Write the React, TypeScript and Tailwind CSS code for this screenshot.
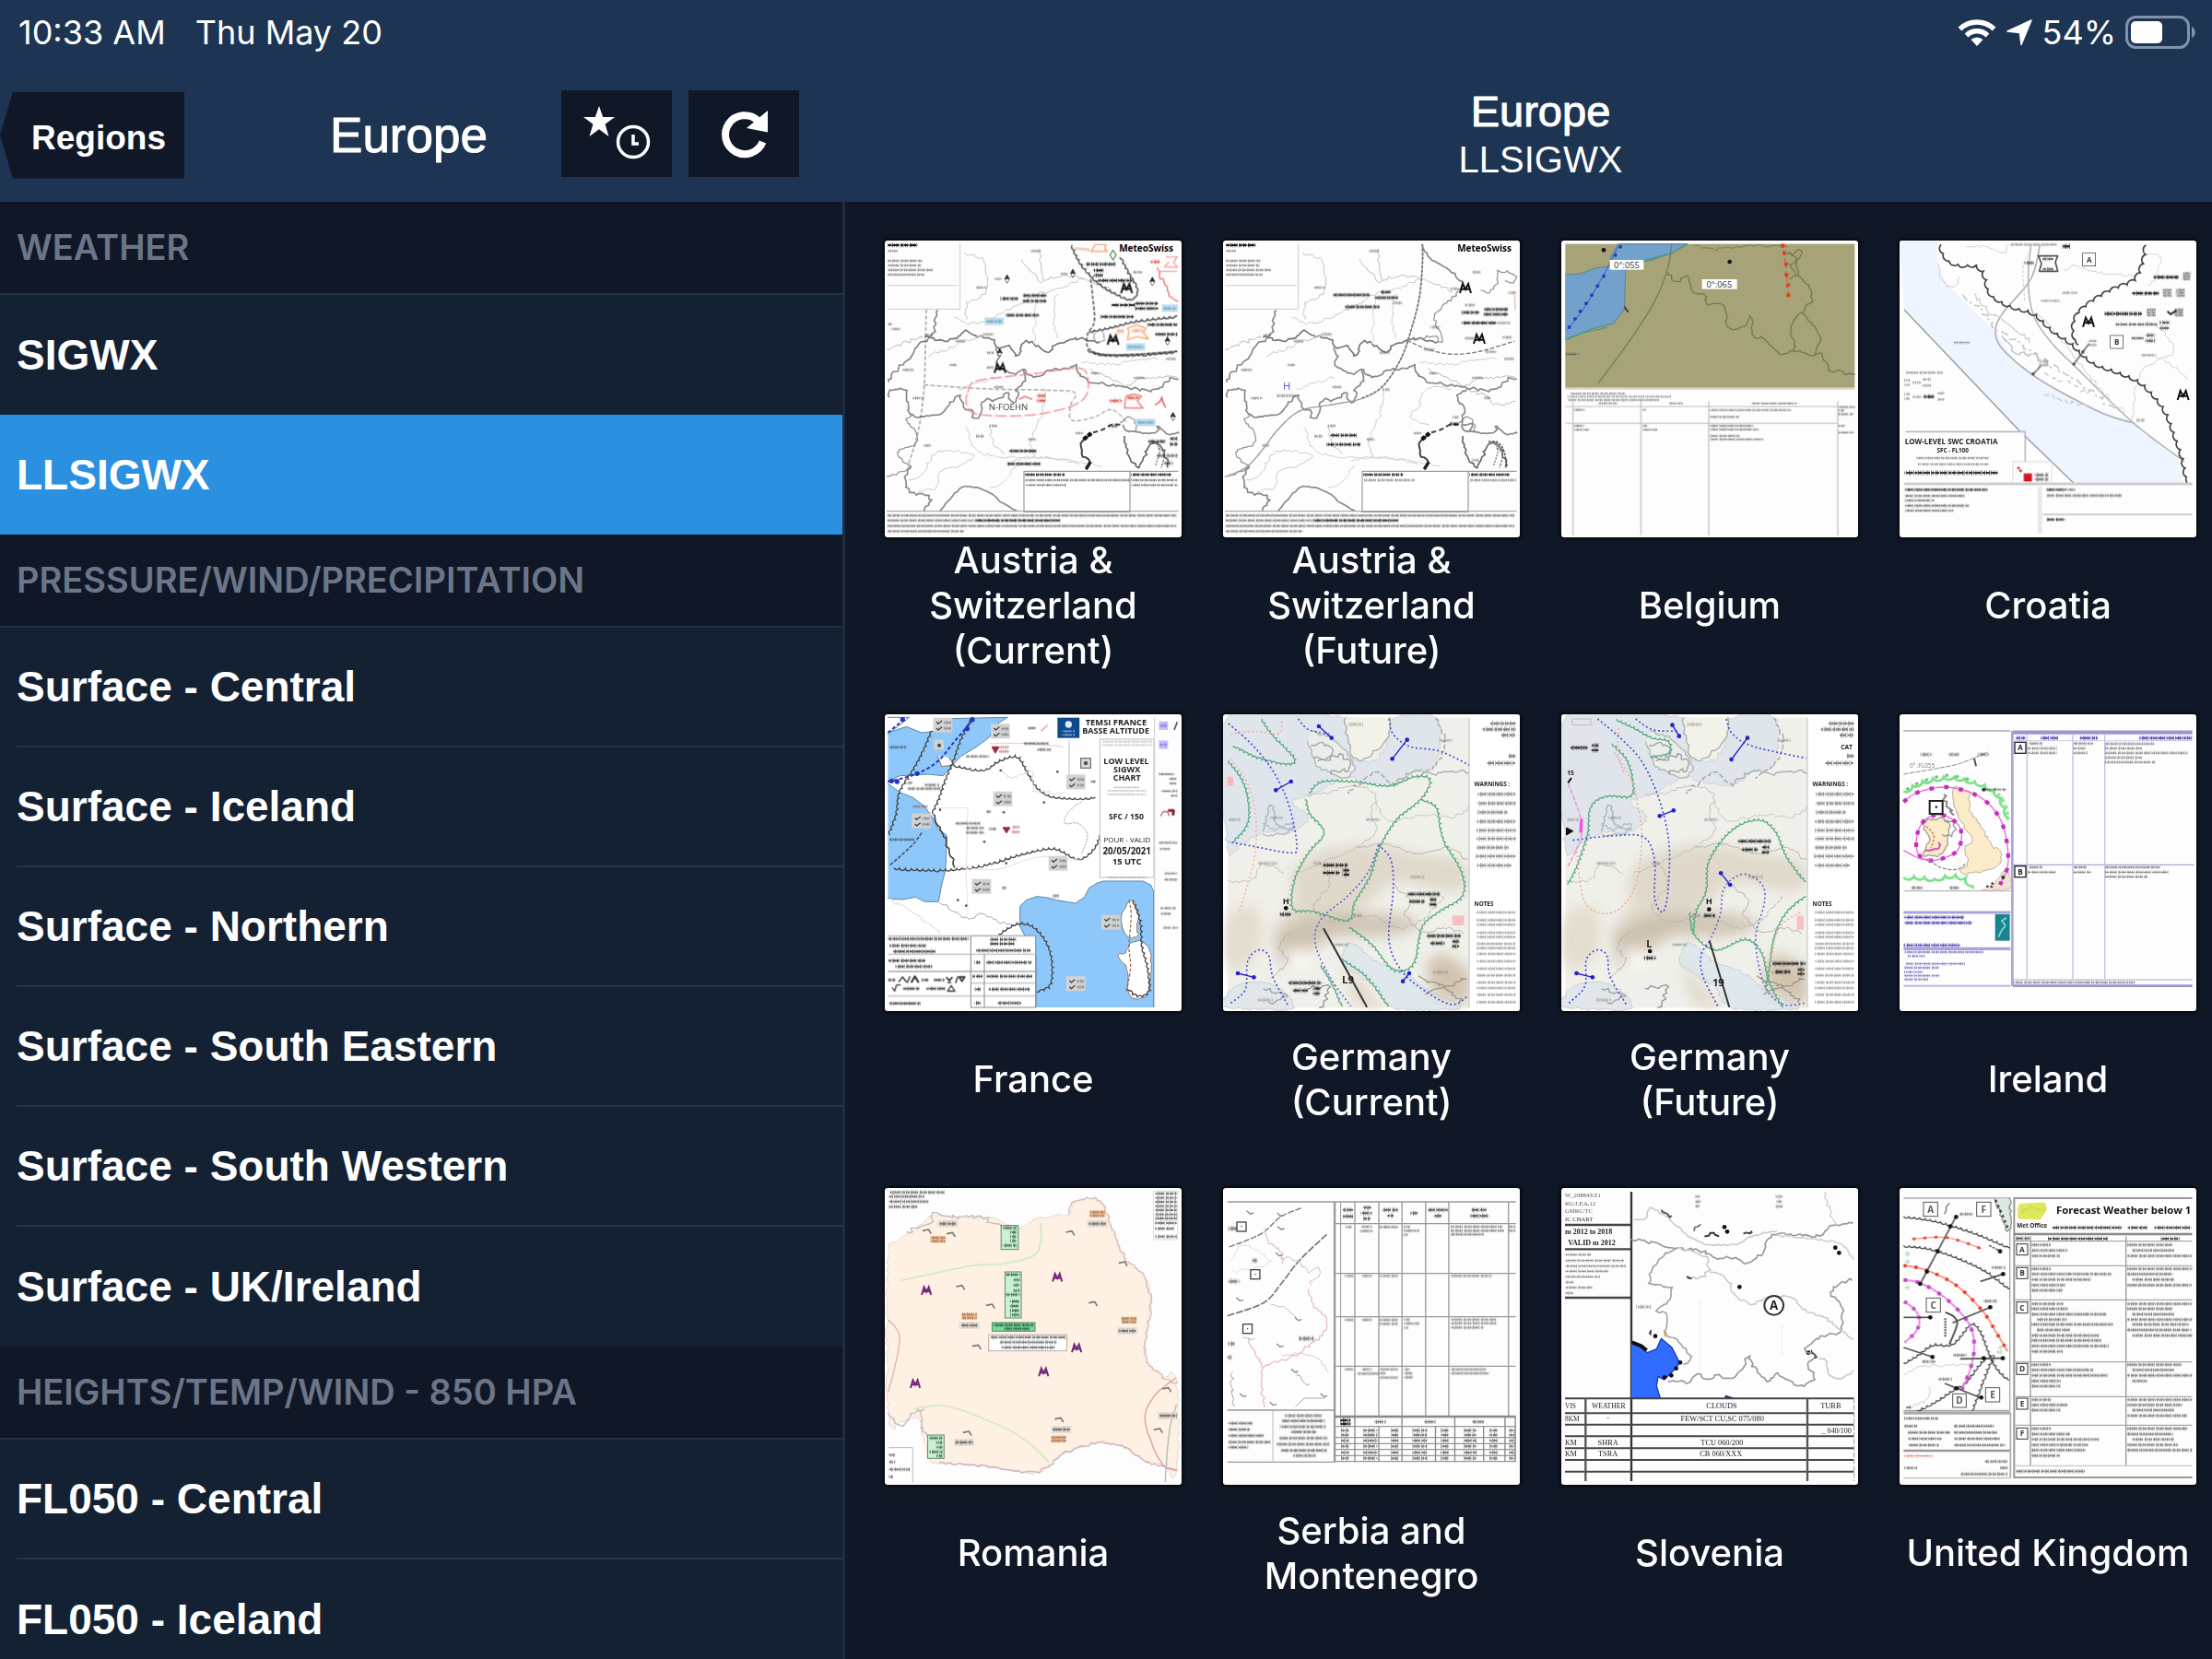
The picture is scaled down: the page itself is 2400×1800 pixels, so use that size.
import { createContext, useContext, useState } from "react";
import type { ReactNode } from "react";

/* ---------- chart drawing kit ---------- */

type Frame = { ox: number; oy: number; k: number };
const FrameContext = createContext<Frame>({ ox: 0, oy: 0, k: 1 });

function useMap() {
  const f = useContext(FrameContext);
  return { X: (x: number) => (x - f.ox) * f.k, Y: (y: number) => y - f.oy, k: f.k };
}

function Chart({ ox, oy, k = 1, children }: { ox: number; oy: number; k?: number; children: ReactNode }) {
  return (
    <FrameContext.Provider value={{ ox, oy, k }}>
      <svg viewBox="0 0 966 966" className="block size-full" aria-hidden="true">
        {children}
      </svg>
    </FrameContext.Provider>
  );
}

type Point = [number, number];

/* Points spaced evenly by step along the spline through pts. */
function walk(pts: Point[], close: boolean, step: number): Point[] {
  const n = pts.length;
  const at = (i: number) => (close ? pts[(i + n) % n] : pts[Math.max(0, Math.min(n - 1, i))]);
  const out: Point[] = [pts[0]];
  let [px, py] = pts[0];
  for (let i = 0; i < (close ? n : n - 1); i++) {
    const [a, b, e, f] = [at(i - 1), at(i), at(i + 1), at(i + 2)];
    for (let j = 1; j <= 60; j++) {
      const t = j / 60;
      const q = (m: 0 | 1) =>
        0.5 *
        (2 * b[m] +
          (e[m] - a[m]) * t +
          (2 * a[m] - 5 * b[m] + 4 * e[m] - f[m]) * t * t +
          (3 * b[m] - a[m] - 3 * e[m] + f[m]) * t * t * t);
      const [x, y] = [q(0), q(1)];
      if (Math.hypot(x - px, y - py) >= step) {
        out.push([x, y]);
        [px, py] = [x, y];
      }
    }
  }
  if (!close) out.push(pts[n - 1]);
  return out;
}

function noise(i: number, seed: number) {
  const v = Math.sin(i * 12.9898 + seed * 0.731) * 43758.5453;
  return (v - Math.floor(v)) * 2 - 1;
}

type LineProps = {
  p: string;
  c?: string;
  w?: number;
  dash?: string;
  fill?: string;
  sharp?: boolean;
  close?: boolean;
  o?: number;
  rough?: number;
};

function usePoints(p: string): Point[] {
  const { X, Y } = useMap();
  return p
    .trim()
    .split(/\s+/)
    .map((s) => {
      const [x, y] = s.split(",").map(Number);
      return [X(x), Y(y)];
    });
}

/* Line through the points of p: straight if sharp, a natural coast or river otherwise. */
function L({ p, c = "#777", w = 3, dash, fill = "none", sharp, close = false, o, rough }: LineProps) {
  const pts = usePoints(p);
  const amp = rough ?? (dash ? 0 : 5);
  const seq = sharp ? pts : walk(pts, close, 9).map(([x, y], i): Point => [x + noise(i, pts[0][0]) * amp, y + noise(i + 99, pts[0][1]) * amp]);
  const d = "M" + seq.map(([x, y]) => `${x.toFixed(1)} ${y.toFixed(1)}`).join("L") + (close ? "Z" : "");
  return <path d={d} stroke={c} strokeWidth={w} strokeDasharray={dash} fill={fill} strokeLinejoin="round" opacity={o} />;
}

/* Boundary line made of small arcs. */
function Scallop({ p, c = "#444", w = 4, close = false, size = 20 }: { p: string; c?: string; w?: number; close?: boolean; size?: number }) {
  const seq = walk(usePoints(p), close, size);
  const r = size * 0.6;
  const d = `M${seq[0][0].toFixed(1)} ${seq[0][1].toFixed(1)}` + seq.slice(1).map(([x, y]) => `A${r} ${r} 0 0 0 ${x.toFixed(1)} ${y.toFixed(1)}`).join("");
  return <path d={d} stroke={c} strokeWidth={w} fill="none" strokeLinejoin="miter" />;
}

function R({ x, y, w, h, f = "none", c = "none", s = 3, o }: { x: number; y: number; w: number; h: number; f?: string; c?: string; s?: number; o?: number }) {
  const { X, Y, k } = useMap();
  return <rect x={X(x)} y={Y(y)} width={w * k} height={h} fill={f} stroke={c} strokeWidth={s} opacity={o} />;
}

function T({ x, y, s = 20, b, c = "#222", a = "start", serif, children }: { x: number; y: number; s?: number; b?: boolean; c?: string; a?: "start" | "middle" | "end"; serif?: boolean; children: ReactNode }) {
  const { X, Y } = useMap();
  return (
    <text
      x={X(x)}
      y={Y(y)}
      fontSize={s}
      fontWeight={b ? 700 : 400}
      fill={c}
      textAnchor={a}
      className={serif ? "font-['Liberation_Serif',serif]" : "font-['Open_Sans',sans-serif]"}
    >
      {children}
    </text>
  );
}

/* Blocks of fine print: each "x,y,width" is one printed line. */
function Print({ at, c = "#555", h = 7, o = 0.6 }: { at: string; c?: string; h?: number; o?: number }) {
  const { X, Y, k } = useMap();
  return (
    <g fill="none" stroke={c} opacity={o}>
      {at
        .trim()
        .split(/\s+/)
        .map((s) => {
          const [x, y, w] = s.split(",").map(Number);
          return (
            <g key={s}>
              <path d={`M${X(x)} ${Y(y)}h${w * k}`} strokeWidth={h * 0.6} strokeDasharray="14 3 22 5 9 2" strokeDashoffset={x % 17} />
              <path d={`M${X(x)} ${Y(y)}h${w * k}`} strokeWidth={h * 1.5} strokeDasharray="3 4 2 6 4 3 2 5" strokeDashoffset={y % 13} opacity={0.75} />
            </g>
          );
        })}
    </g>
  );
}

function Peaks({ at, c = "#111", s = 1 }: { at: string; c?: string; s?: number }) {
  const { X, Y } = useMap();
  return (
    <g fill="none" stroke={c} strokeWidth={6}>
      {at.split(" ").map((q) => {
        const [x, y] = q.split(",").map(Number);
        const [cx, cy] = [X(x), Y(y)];
        return (
          <path
            key={q}
            d={`M${cx - 18 * s} ${cy + 16 * s}L${cx - 9 * s} ${cy - 14 * s}L${cx} ${cy + 4 * s}L${cx + 9 * s} ${cy - 14 * s}L${cx + 18 * s} ${cy + 16 * s}M${cx - 12 * s} ${cy + 3 * s}H${cx + 12 * s}`}
          />
        );
      })}
    </g>
  );
}

function Dots({ at, c = "#111", r = 6 }: { at: string; c?: string; r?: number }) {
  const { X, Y } = useMap();
  return (
    <g fill={c}>
      {at.split(" ").map((q) => {
        const [x, y] = q.split(",").map(Number);
        return <circle key={q} cx={X(x)} cy={Y(y)} r={r} />;
      })}
    </g>
  );
}

function Letter({ x, y, t, s = 36, size = 24, c = "#333", w = 3 }: { x: number; y: number; t: string; s?: number; size?: number; c?: string; w?: number }) {
  const { k } = useMap();
  return (
    <>
      <R x={x - s / 2 / k} y={y - s / 2} w={s / k} h={s} f="#fff" c={c} s={w} />
      <T x={x} y={y + size * 0.36} s={size} a="middle" c={c} b>
        {t}
      </T>
    </>
  );
}

/* ---------- Austria & Switzerland ---------- */

function AlpsBase() {
  return (
    <>
      <L p="305,75 305,288 68,288" c="#ccc" sharp />
      <L p="68,211 300,211" c="#ccc" sharp />
      <Print at="70,80,98" c="#000" h={9} o={0.9} />
      <Print at="70,99,32 70,131,112 70,146,108 70,161,146 70,176,118" />
      <T x={999} y={101} s={30} b a="end" c="#000">
        MeteoSwiss
      </T>
      <L p="320,100 325,112 380,125 388,170 395,215 370,250 330,268 325,320" c="#c4c4c4" />
      <L p="505,128 540,170 570,200 610,185 680,183 740,200 800,230" c="#c0c0c0" />
      <L p="570,95 565,150 572,190" c="#bbb" />
      <L p="290,318 340,335 420,310 500,270 560,238 640,215 700,190" c="#c8c8c8" />
      <L p="230,290 225,330 215,375 160,410 150,440 105,480 68,525" c="#888" w={5} />
      <L p="190,375 230,390 290,385 325,360 350,378 400,380 430,410 465,405 490,440 515,395 550,405 590,425 620,405 680,385 760,395" c="#777" w={5} />
      <L p="68,420 120,400 180,380" c="#bbb" />
      <L p="200,440 260,420 320,390 380,378" c="#c8c8c8" />
      <L p="420,410 430,445 425,470 480,500 510,485 530,505 565,510 590,490 640,482 690,468 685,490 720,520 830,540 940,552 980,520 1015,512" c="#888" w={5} />
      <L p="510,485 515,520 490,550 500,570 470,590 460,560 420,585 390,580 375,610 355,652 340,620 320,610 300,570 270,600 235,632 150,635 135,600 130,550 80,550 72,580" c="#888" w={5} />
      <L p="150,635 130,650 165,700 145,740 105,745 115,785 145,800 70,835" c="#999" w={4} />
      <L p="145,800 125,840 140,880 210,905 185,946" c="#888" w={5} />
      <L p="240,946 290,885 330,865 400,885 445,920 490,946" c="#888" w={5} rough={2} />
      <L p="325,670 350,735 400,765 480,770 560,775 700,785 770,800" c="#d0d0d0" />
      <L p="480,780 580,770 690,790" c="#d0d0d0" />
      <L p="140,845 180,830 220,760 280,750 350,765 300,800 240,815 225,870 170,880" c="#d0c6d0" />
      <L p="400,870 450,850 485,800" c="#d4d4d4" />
      <L p="405,665 410,720 450,760" c="#c8c8c8" />
      <L p="580,540 575,620 550,680 535,720 545,770" c="#ccc" />
      <L p="620,240 610,300 620,385" c="#ccc" />
      <L p="555,260 548,330 545,400" c="#d4d4d4" />
      <L p="300,550 360,530 420,510" c="#d0d0d0" />
      <L p="700,460 800,470 860,455 950,450" c="#ccc" />
      <L p="730,480 800,520 850,535 900,512 1010,510" c="#bbb" />
      <L p="735,692 705,715 697,735 705,765 730,785 715,808" c="#444" w={6} rough={3} />
      <L p="732,692 705,714" c="#111" w={13} rough={0} dash="14 4" />
      <L p="730,785 715,808" c="#222" w={10} rough={0} />
      <L p="738,690 770,680 800,664 835,665" c="#444" w={6} dash="16 10" />
      <L p="825,662 850,640 880,660 870,690" c="#999" w={4} />
      <L p="830,665 870,690 940,690 950,665 975,690 1015,692" c="#888" w={5} />
      <L p="840,700 850,750 885,802 905,770 925,730 960,735 985,800" c="#666" w={5} />
      <L p="935,720 955,745 940,800" c="#777" w={4} dash="6 4" />
      <L p="950,740 970,760 960,805" c="#777" w={4} dash="8 4" />
      <R x={513} y={816} w={345} h={132} f="#fff" c="#888" />
      <L p="858,816 1016,816" c="#888" sharp />
      <L p="66,946 1016,946" c="#999" sharp />
      <Print at="68,960,940 68,976,280 68,994,940 68,1011,250" c="#333" h={7} />
      <Print at="352,976,278" c="#000" h={8} o={0.85} />
      <Print at="516,827,130 862,827,130" c="#111" h={8} o={0.85} />
      <Print at="535,99,36 355,218,36 380,370,34 190,373,26 270,470,26 118,486,36 290,392,30 150,578,38 185,732,26 400,668,26 357,702,26 680,692,26 870,512,36 525,712,28 730,497,28 415,542,30 975,450,32" c="#666" h={8} />
    </>
  );
}

function AustriaCurrent() {
  return (
    <Chart ox={60} oy={65}>
      <AlpsBase />
      <L p="195,290 192,400 188,540 170,680 135,800" dash="12 7" c="#666" />
      <L p="188,535 400,548 590,552 680,560 665,600 668,650 740,640 800,615 850,660" dash="14 7" c="#777" />
      <Scallop p="670,80 700,140 760,205 830,245 865,255 880,225 850,170 825,120" c="#333" w={4} size={17} />
      <L p="730,190 738,260 742,330 720,370 722,415 770,435 880,435 1012,425" c="#333" w={4} dash="12 6" />
      <Scallop p="725,360 800,345 880,325 1012,310" c="#333" w={4} size={17} />
      <Scallop p="720,420 770,435 880,435 1012,425" c="#333" w={4} size={17} />
      <L p="740,370 755,400 775,380 765,350" c="#888" />
      <L p="330,560 350,525 440,510 560,497 690,480 720,510 715,570 665,605 560,630 440,636 345,625 325,590" close c="#f0868c" w={4} dash="38 10" />
      <Peaks at="847,220 803,388 435,480" />
      <R x={385} y={316} w={62} h={24} f="#bcdcf0" />
      <R x={962} y={273} w={52} h={24} f="#bcdcf0" />
      <R x={845} y={399} w={62} h={24} f="#bcdcf0" />
      <R x={875} y={645} w={66} h={24} f="#bcdcf0" />
      <Print at="390,328,52 968,286,40 850,411,50 882,657,52" c="#4a83a8" />
      <L p="735,95 745,78 780,78 775,90 785,100 730,100" c="#f6b088" w={5} close sharp />
      <L p="680,90 725,95" c="#f6a878" w={8} dash="5 3" />
      <L p="855,360 850,350 880,340 910,350 902,365 918,385 880,378 850,388" c="#f8b27c" w={5} close sharp />
      <Print at="866,358,36 812,360,26" c="#f08a4a" h={12} />
      <L p="845,572 870,565 895,572 882,588 900,610 840,610" c="#f08a8a" w={5} close sharp />
      <Print at="848,577,38 792,587,40 555,570,28 555,586,28 925,134,30" c="#e03c3c" h={10} o={0.8} />
      <L p="940,600 955,590 962,575 966,592 974,608" c="#e86868" w={5} sharp />
      <L p="497,582 515,572 540,582" c="#e86868" w={4} sharp />
      <L p="945,150 958,185 975,215 985,245 1012,265" c="#f08a8a" w={5} />
      <L p="950,165 1012,165" c="#f4a4a4" w={4} sharp />
      <L p="975,118 1012,118 1000,135 1012,152 970,150 985,135" c="#f6b0b0" w={5} sharp />
      <Print at="437,254,58 508,244,78 508,262,78 453,308,108 465,750,88 458,792,110 715,142,98 755,195,110 798,275,76 875,270,74 875,286,74 762,313,108 740,162,32 740,178,32 917,719,56 988,710,24 988,728,24 940,370,72 915,339,98" c="#000" h={9} o={0.8} />
      <Print at="518,845,340 518,861,132 862,845,150 862,861,150" c="#444" />
      <Print at="788,668,30 945,765,68 968,790,30" c="#222" h={10} />
      <T x={398} y={617} s={29} c="#444">
        N-FOEHN
      </T>
      {["458,190", "672,172", "931,198", "998,638", "434,430", "980,392"].map((q) => {
        const [x, y] = q.split(",").map(Number);
        return (
          <g key={q}>
            <L p={`${x - 8},${y} ${x},${y + 14} ${x + 8},${y}`} c="#777" w={3} sharp />
            <L p={`${x - 8},${y} ${x},${y - 14} ${x + 8},${y}`} close fill="#333" c="#333" w={2} sharp />
          </g>
        );
      })}
      <L p="793,112 803,96 813,112 803,128" close c="#5c9a5c" w={4} sharp />
      <Print at="70,337,16 80,353,30 417,190,22 632,173,24 868,168,30 393,430,22 390,478,22" c="#555" />
    </Chart>
  );
}

function AustriaFuture() {
  return (
    <Chart ox={51} oy={65}>
      <FrameContext.Provider value={{ ox: 60, oy: 65, k: 1 }}>
        <AlpsBase />
      </FrameContext.Provider>
      <L p="700,78 700,140 690,250 665,350 630,450 570,540 500,580 400,600 300,620 230,680 180,745 130,800 68,832" c="#999" w={4} rough={0} />
      <L p="700,78 700,140 690,250 665,350 630,450 570,540 500,580" c="#777" w={6} dash="6 8" />
      <L p="700,80 720,115 770,150 835,205" c="#888" w={5} />
      <L p="650,390 720,420 800,435 890,425 1000,392" c="#777" dash="14 6" w={4} />
      <L p="835,205 800,250 740,310 760,370 765,400 735,375 680,385" c="#999" w={4} />
      <L p="890,230 920,232 945,200 945,165 1000,175 1000,200 970,200" c="#999" w={4} />
      <L p="845,545 810,580 835,610 830,660 865,665 855,690" c="#888" w={5} />
      <L p="790,545 715,545 690,600 660,640 720,665" c="#ccc" />
      <L p="845,550 900,570 940,600 1000,590" c="#bbb" />
      <L p="915,720 945,722 965,750 975,800" c="#555" w={5} dash="8 4" />
      <Peaks at="840,220 885,385" />
      <T x={246} y={551} s={34} c="#5a5ae0">
        H
      </T>
      <Print at="410,242,118 565,233,32 545,251,76 448,281,112 400,699,90 388,729,110 828,299,58 898,289,80 898,305,80 828,333,110 788,662,30" c="#000" h={9} o={0.8} />
      <Print at="510,845,165 856,845,150 603,268,34 560,430,32 862,168,30 705,420,34 725,347,34 940,333,46 790,222,28 980,235,24 838,275,32 838,383,28 960,380,30 905,427,34 225,570,64 570,550,24 900,577,22 795,640,24 860,780,24" c="#666" h={8} />
      <L p="1000,240 1002,290" c="#f6d0c0" w={6} sharp />
    </Chart>
  );
}

/* ---------- Belgium ---------- */

function Belgium() {
  return (
    <Chart ox={40} oy={65}>
      <R x={53} y={76} w={942} h={468} f="#a5a377" />
      <L p="53,176 100,174 150,155 205,148 200,120 225,76 450,76 400,105 330,130 250,140 248,200 245,290 210,335 140,352 53,388" fill="#72a2cc" c="#5c7f8c" w={3} sharp />
      <L p="53,388 110,365 190,348" c="#4b9a7c" w={4} rough={2} />
      <L p="300,130 380,112 450,78" c="#4b9a7c" w={4} rough={2} />
      <L p="225,85 195,145 150,225 110,290 60,355" c="#2f57c8" w={3} rough={0} />
      <Dots at="232,85 216,112 178,181 158,213 139,243 121,270 102,295 85,320 66,347" c="#2540b8" />
      <L p="400,76 385,160 345,260 270,380 160,530" c="#7c7b50" w={4} rough={0} />
      <L p="385,165 415,198 450,180 470,235 510,240 515,272 570,275 580,345 615,352 645,335 660,308 665,375 700,385 752,435 800,425 855,438 885,435 920,495 950,485 965,500 995,500" c="#77774c" w={4} rough={4} />
      <L p="780,100 805,130 810,175 850,220 855,260 830,300 880,375 865,435" c="#77774c" w={4} />
      <L p="830,300 800,320 785,365 800,400 795,425" c="#77774c" w={4} />
      <L p="775,115 825,95 800,140 785,150 812,178 785,185" c="#7c7b50" w={4} />
      <L p="470,78 540,95 600,85 780,82" c="#7c7b50" w={3} />
      <L p="760,76 768,125 773,180 779,245" c="#e0603c" w={4} dash="14 8" />
      <Dots at="761,82 766,106 772,142 773,177 778,210 779,243" c="#dc4422" r={7} />
      <R x={198} y={128} w={110} h={32} f="#fff" />
      <R x={498} y={191} w={114} h={32} f="#fff" />
      <T x={253} y={154} s={28} a="middle" c="#333">
        0°:055
      </T>
      <T x={554} y={217} s={28} a="middle" c="#333">
        0°:065
      </T>
      <Dots at="178,96 588,134" r={7} />
      <L p="245,280 258,298" c="#444" w={6} sharp />
      <Print at="56,435,40" c="#444" />
      <R x={53} y={544} w={942} h={6} f="#d6d4c0" />
      <Print at="70,563,178 60,573,338 62,584,296 160,595,62 390,595,46 658,595,150" c="#555" h={6} />
      <L p="53,605 940,605" sharp c="#c4b8c4" />
      <L p="53,660 940,660" sharp c="#c4b8c4" />
      {[78, 299, 520, 940].map((x) => (
        <L key={x} p={`${x},588 ${x},1024`} sharp c="#c8bec8" w={4} />
      ))}
      <Print at="80,616,36 303,616,12 523,617,264 523,639,98 80,668,34 80,681,50 303,668,16 303,681,50 523,668,142 523,680,158 523,701,98 523,712,174 942,607,54 942,618,20 942,630,50 942,668,20 942,690,50" />
    </Chart>
  );
}

/* ---------- Croatia ---------- */

function Croatia() {
  return (
    <Chart ox={63} oy={65}>
      <L p="63,65 185,65 190,160 225,215 300,290 375,360 440,460 550,540 700,610 820,655 970,780 985,852 630,852 470,705 78,290" fill="#eef5fe" c="#eef5fe" sharp w={1} />
      <L p="78,290 455,686" c="#999" w={4} sharp />
      <L p="470,700 630,855" c="#999" w={4} sharp />
      <L p="520,80 490,190 400,300 375,360 400,420 500,505 620,575 730,630 820,658" c="#b0b0b0" w={5} rough={0} />
      <L p="490,80 482,200 500,310 560,400 650,490 820,655 990,785" c="#b8b8b8" w={5} rough={0} />
      <L p="500,300 560,350 700,530 800,630" c="#ccc" />
      <L p="820,655 835,540 860,480 950,430 930,370 870,330" c="#d4d4d4" />
      <L p="900,440 960,480 1005,520" c="#d4d4d4" />
      <L p="600,160 640,150 720,170 830,180" c="#d0d0d0" />
      <L p="280,90 340,85 400,105 415,80" c="#d4d4d4" />
      <L p="870,110 910,120 900,180 870,210" c="#e8d0d0" />
      <L p="470,260 465,150 490,100" c="#ccc" dash="10 5" />
      <L p="190,140 200,200 240,215 260,180" c="#ccc" />
      <L p="260,245 300,265 330,290 375,350 430,380 520,450 640,520 760,610" c="#c4cad0" w={5} rough={9} dash="24 10 8 12" />
      <L p="300,240 350,290 420,340 480,390" c="#ccd2d8" w={4} rough={9} />
      <L p="395,380 420,400 440,430 500,440 520,480" c="#b8c0c8" w={4} rough={8} />
      <L p="540,500 580,520 680,560" c="#c4cad0" w={4} rough={9} dash="18 16" />
      <L p="540,560 600,590 680,600" c="#c4cad0" w={4} rough={8} dash="18 10" />
      <Scallop size={30} p="198,78 215,125 265,145 320,145 345,190 360,240 430,280 500,300 560,355 620,395 650,425 700,465 770,490 840,520 880,555 930,620 960,700 985,770 1000,855" c="#444" w={5} />
      <Scallop size={30} p="865,80 860,130 830,195 760,225 690,265 640,310 630,370 645,405" c="#444" w={5} />
      <Letter x={680} y={127} t="A" s={42} c="#333" w={2} />
      <Letter x={770} y={395} t="B" s={42} c="#333" w={2} />
      <L p="515,115 578,115 570,135 578,165 518,165 525,140" close c="#555" w={5} sharp />
      <Print at="528,125,36 530,158,34 470,138,30" c="#222" h={10} />
      <Print at="592,84,30" c="#111" h={11} o={0.9} />
      <Peaks at="678,330 986,568" />
      <Print at="425,78,150 523,261,60 593,235,48 240,397,52 850,438,48 85,495,118 137,517,28 137,537,28 78,520,18 78,535,18 78,565,18 78,580,18 184,562,26 184,582,26 680,392,24 680,405,24 105,527,28 105,574,28" c="#666" />
      <Print at="820,237,86 728,303,124 890,184,80 142,573,34" c="#000" h={10} o={0.85} />
      <Print at="767,338,134 818,383,40" c="#333" h={9} />
      <g>
        {["983,172", "920,226", "963,226", "868,290", "958,290"].map((q) => {
          const [x, y] = q.split(",").map(Number);
          return <Print key={q} at={`${x},${y},28 ${x},${y + 9},28 ${x},${y + 18},28`} c="#333" h={8} />;
        })}
      </g>
      <Print at="910,332,32 910,350,32 863,373,32 863,391,32" c="#111" h={10} />
      <L p="935,295 945,305 965,292" c="#222" w={6} sharp />
      <L p="680,400 632,465" c="#555" w={4} sharp />
      <L p="525,470 498,500" c="#555" w={4} sharp />
      <Dots at="630,467 498,499 660,427" r={5} c="#444" />
      <Print at="522,458,26 522,470,26 835,650,26" c="#777" h={9} />
      <L p="82,687 472,687 472,785" c="#bbb" w={5} sharp />
      <T x={80} y={729} s={24} b c="#222">
        LOW-LEVEL SWC CROATIA
      </T>
      <T x={236} y={754} s={19} b a="middle">
        SFC - FL100
      </T>
      <Print at="117,773,236 123,793,230" c="#666" />
      <Print at="80,821,304" c="#111" h={10} o={0.85} />
      <L p="432,850 432,785 558,785 558,850" c="#ddd" sharp />
      <R x={467} y={823} w={27} h={26} f="#d81324" />
      <L p="448,803 462,820" c="#b02030" w={8} dash="7 4" sharp />
      <Print at="503,828,44 503,842,44" c="#222" h={10} />
      <L p="78,857 1016,857" c="#cdcdd1" w={9} sharp />
      <L p="520,865 520,1018" c="#e8e8ec" w={14} sharp />
      <L p="530,957 1016,957" c="#cdcdd1" w={6} sharp />
      <Print at="80,876,270 540,876,66 540,973,62" c="#111" h={8} o={0.8} />
      <Print at="80,896,196 80,911,98 80,928,210 80,944,158 540,895,250 608,876,26" c="#444" h={8} />
    </Chart>
  );
}

/* ---------- France ---------- */

const franceNotes: [number, number][] = [
  [250, 80],
  [437, 100],
  [445, 320],
  [683, 265],
  [625, 530],
  [180, 392],
  [376, 605],
  [797, 722],
  [683, 922],
];

function France() {
  return (
    <Chart ox={60} oy={45}>
      <R x={70} y={55} w={868} h={944} f="#fff" />
      <L p="70,105 130,85 180,105 220,100 225,60 460,55 420,80 400,120 360,150 310,180 290,200 270,225 250,245 200,240 110,245 70,262" fill="#8ec8fa" c="#5b86a5" w={3} sharp />
      <L p="70,55 140,55 70,110" fill="#fff" c="#5b86a5" w={3} sharp />
      <L p="232,180 245,215 285,210 268,185" fill="#fff" c="#777" sharp />
      <L p="70,270 110,300 150,315 190,345 215,380 235,420 262,440 258,550 245,600 235,655 190,655 160,640 120,648 70,645" fill="#8ec8fa" c="#5b86a5" w={3} sharp />
      <L p="552,999 552,830 520,775 500,735 500,670 520,650 555,638 590,642 620,650 680,660 710,640 725,610 750,595 770,588 900,588 925,600 935,620 935,999" fill="#8ec8fa" c="#5b86a5" w={3} sharp />
      <L p="863,650 885,690 880,740 885,765 850,770 830,720 840,680" close fill="#fff" c="#8a7a70" w={3} rough={3} />
      <L p="860,790 900,785 925,830 922,940 895,970 855,960 850,880 820,830 845,820" close fill="#fff" c="#8a7a70" w={3} rough={3} />
      <L p="855,650 862,700 855,800 860,870 845,950" c="#a06a50" w={4} dash="10 6" />
      <L p="235,655 330,710 380,695 430,720 500,730" c="#aaa" />
      <L p="70,645 150,690 240,755" c="#d4d4d4" />
      <Scallop p="215,100 185,170 150,235 110,300 100,370 75,438" size={17} />
      <Scallop p="345,60 310,130 285,200 260,260 235,330 215,370" size={17} />
      <L p="215,370 245,420 265,480 290,540" c="#444" w={5} />
      <Scallop p="285,210 380,225 430,195 490,180 520,220 555,280 600,310 680,318 745,315" size={17} />
      <Scallop p="90,545 250,550 380,535 500,500 610,480 690,515 740,480 757,440" size={17} />
      <Scallop p="430,760 490,725 545,735 590,790 608,860 600,930 555,950" size={17} />
      <Scallop p="870,650 895,720 900,800 918,870 922,950 880,965 850,940" c="#444" w={4} size={17} />
      <L p="180,430 150,470 75,538" c="#556" w={5} dash="12 5" />
      <L p="70,265 160,240 230,200 290,130 350,60" c="#2434c4" w={6} dash="12 7" />
      <L p="70,105 125,60" c="#2434c4" w={6} dash="12 7" />
      <Dots at="82,262 100,264 165,238 328,92 345,62 118,62" c="#2434c4" r={8} />
      <L p="440,220 470,250 540,230 545,290 640,300" c="#d8d8dc" />
      <L p="230,350 330,350 325,560 330,700" c="#e8e2e8" sharp />
      <L p="700,330 660,360 645,400 690,400 720,440 700,500" c="#aaa" dash="8 3" />
      <L p="400,140 520,140 640,150" c="#f6c4c8" rough={1} />
      <L p="290,540 420,550 560,510 700,520" c="#f8d4d8" rough={1} />
      {franceNotes.map(([x, y]) => (
        <g key={`${x}-${y}`}>
          <R x={x - 32} y={y - 24} w={62} h={48} f="#d2d2d2" />
          <L p={`${x - 22},${y - 10} ${x - 16},${y - 4} ${x - 4},${y - 14}`} c="#444" w={4} sharp />
          <L p={`${x - 22},${y + 10} ${x - 16},${y + 16} ${x - 4},${y + 6}`} c="#444" w={4} sharp />
          <Print at={`${x + 2},${y - 8},24 ${x + 2},${y + 11},24`} c="#666" h={8} />
        </g>
      ))}
      <R x={220} y={128} w={32} h={32} f="#d2d2d2" />
      <Dots at="237,146" r={6} c="#444" />
      <R x={698} y={188} w={32} h={32} c="#777" s={4} f="#ddd" />
      <Dots at="714,204" r={7} c="#555" />
      <Dots at="578,332 384,460 455,530 298,650 325,668 437,228 622,232 240,356 447,364" c="#555" r={4} />
      <L p="410,152 430,152 420,170" close c="#9c2c40" fill="#9c2c40" w={5} sharp />
      <L p="446,414 466,414 456,430" close c="#9c2c40" fill="#9c2c40" w={5} sharp />
      <Print at="432,152,32 432,166,32 472,412,28 472,428,28 150,345,50" c="#b04858" h={8} />
      <L p="570,98 590,80" c="#e08a92" w={8} dash="4 4" sharp />
      <Print at="512,140,80 525,90,26 325,182,74 290,400,80 325,415,58 325,430,58 400,418,22 130,268,20 135,287,106 190,275,46 75,152,56 75,453,82 388,362,18 440,610,16 728,264,18 555,160,46 606,636,20" c="#333" h={8} />
      <L p="660,130 660,240" c="#bbb" sharp />
      <R x={622} y={56} w={72} h={66} f="#0f4a8c" />
      <Dots at="658,78" c="#dfeafa" r={11} />
      <Print at="638,100,40 638,112,40" c="#bfd8f0" h={6} />
      <R x={695} y={56} w={242} h={70} f="#fff" />
      <R x={760} y={126} w={176} h={450} f="#fff" c="#bbb" />
      <T x={813} y={80} s={28} b a="middle">
        TEMSI FRANCE
      </T>
      <T x={812} y={108} s={27} b a="middle">
        BASSE ALTITUDE
      </T>
      <Print at="768,134,160 768,145,160 805,283,84 785,294,126 785,306,126 785,576,128" c="#999" h={5} />
      <T x={846} y={206} s={27} b a="middle">
        LOW LEVEL
      </T>
      <T x={848} y={233} s={27} b a="middle">
        SIGWX
      </T>
      <T x={848} y={260} s={27} b a="middle">
        CHART
      </T>
      <T x={846} y={387} s={26} b a="middle">
        SFC / 150
      </T>
      <T x={848} y={461} s={24} a="middle">
        POUR - VALID
      </T>
      <T x={848} y={500} s={29} b a="middle">
        20/05/2021
      </T>
      <T x={848} y={533} s={28} b a="middle">
        15 UTC
      </T>
      <L p="938,55 938,999" c="#ccc" sharp />
      <R x={952} y={68} w={30} h={28} f="#c8c4fa" />
      <R x={952} y={130} w={30} h={28} f="#c8c4fa" />
      <Print at="956,82,22 956,144,22" c="#7068e0" h={11} />
      <L p="1012,70 1002,96" c="#555" w={5} sharp />
      <Print at="952,240,50 985,255,28 960,295,52 990,310,22 952,463,60 955,483,34 970,563,42 970,583,42 958,676,50 958,694,34 965,740,48 985,270,26" c="#444" />
      <L p="958,376 966,362 980,362 986,376" c="#b86a70" w={4} sharp />
      <L p="982,358 1000,358 998,374" c="#8c2430" w={9} sharp />
      <R x={66} y={766} w={274} h={233} f="#fff" />
      <R x={340} y={766} w={211} h={233} f="#fff" c="#888" />
      <L p="70,766 340,766" c="#aaa" sharp />
      <L p="70,826 551,826" c="#aaa" sharp />
      <L p="70,882 551,882" c="#999" w={4} sharp />
      <L p="340,920 551,920" c="#aaa" sharp />
      <L p="70,962 551,962" c="#aaa" sharp />
      <L p="384,826 384,999" c="#888" sharp />
      <Print at="70,776,264 75,798,120 88,817,136 72,847,120 95,866,120 72,910,22 180,910,22 220,910,34 120,938,54 196,938,62 75,986,100 402,778,86 402,792,80 358,814,176 352,853,20 390,853,150 346,898,32 392,898,148 352,940,20 398,940,134 352,985,20 428,985,76" c="#222" h={9} o={0.75} />
      <L p="105,916 118,900 130,916" c="#222" w={4} sharp />
      <L p="146,918 158,898 170,918" c="#222" w={6} sharp />
      <L p="132,920 142,898" c="#222" w={4} sharp />
      <L p="260,900 270,912 280,900" c="#222" w={5} sharp />
      <L p="264,918 276,918" c="#222" w={4} sharp />
      <L p="290,920 298,898" c="#222" w={4} sharp />
      <L p="302,900 311,914 320,900" close c="#222" w={5} sharp />
      <L p="264,946 276,928 288,946" close c="#333" w={4} sharp />
      <L p="84,934 92,946 98,926 112,926" c="#333" w={4} sharp />
    </Chart>
  );
}

/* ---------- Germany ---------- */

function GermanyBase({ id }: { id: string }) {
  return (
    <>
      <defs>
        <filter id={id} x="-20%" y="-20%" width="140%" height="140%">
          <feGaussianBlur stdDeviation="20" />
        </filter>
      </defs>
      <R x={47} y={56} w={573} h={944} f="#f0f0ea" />
      <L p="47,56 325,56 340,150 350,195 400,190 430,120 440,56 545,56 540,200 490,235 440,275 380,270 330,250 240,310 200,330 240,380 200,430 130,430 80,470 47,470" close fill="#dfe5ea" c="#ccd2d6" w={3} />
      <L p="325,56 335,140 350,190 385,180 430,110 430,56" fill="#f3f2e8" c="#a8aeaa" w={4} />
      <L p="240,130 260,210 330,250 345,200 300,130 250,100" fill="#e9eeeb" c="#b0b6b4" w={4} />
      <L p="320,860 340,790 400,850 460,880 520,940 600,1000 440,1000 400,930" close fill="#dfe8ec" c="#c9cfd4" />
      <L p="47,960 90,920 160,930 200,1000 47,1000" close fill="#e0e6ea" c="#ccc" />
      <g filter={`url(#${id})`}>
        <L p="200,560 270,490 400,470 500,500 600,520 615,600 560,620 450,590 400,640 330,720 250,760 180,800 150,760 200,660" close fill="#d9d0c0" c="none" o={0.75} />
        <L p="170,760 250,700 340,690 460,700 500,740 400,770 300,770 200,860 170,850" close fill="#c8bca9" c="none" o={0.8} />
        <L p="47,700 110,670 130,740 110,840 47,870" close fill="#e2dacb" c="none" o={0.9} />
        <L p="520,860 560,830 615,880 615,980 540,950" close fill="#cdbfa8" c="none" o={0.9} />
        <L p="310,850 330,900 350,980 410,1000 370,930" close fill="#dccdb8" c="none" o={0.7} />
        <L p="190,810 240,820 240,860 200,870" close fill="#fbfaf6" c="none" o={0.9} />
      </g>
      <L p="240,310 290,300 330,280 380,285 400,320 385,370 400,430 350,480 270,530 210,560" c="#c0c0ba" />
      <L p="440,275 490,230 530,240 600,230 620,240" c="#a8adaa" w={4} />
      <L p="400,330 430,390 520,370 580,380 620,350" c="#c8c8c2" />
      <L p="350,480 430,470 500,500 570,480 615,520" c="#b9b4aa" />
      <L p="270,530 290,600 250,680 300,720 380,700 460,740 520,700 560,640" c="#b8b2a8" dash="14 4" rough={6} />
      <L p="440,600 480,650 470,700 510,750 560,740 610,760" c="#b8b2a8" />
      <L p="180,560 130,530 110,580 47,590" c="#c4c0b8" />
      <L p="200,750 170,800 190,850 150,900" c="#b8b2a8" />
      <L p="130,430 150,340 165,400 200,420" c="#aab0b8" w={4} />
      <L p="130,400 160,420 200,400 190,430 130,440" c="#b4bcc8" w={4} />
      <L p="245,150 270,140 300,165 280,190 250,185" c="#a0a6a4" w={4} />
      <L p="260,200 290,190 320,180 340,220 310,230 290,240" c="#9aa09e" w={4} rough={8} />
      <L p="440,280 400,230 370,260 330,300" c="#9aa09e" w={4} rough={6} dash="16 8" />
      <L p="540,56 560,120 545,200 500,250" c="#a0a6a4" w={4} rough={6} dash="16 6" />
      <L p="240,940 290,930 270,1000" c="#8f9593" w={4} rough={8} />
      <L p="130,940 190,960 150,985" c="#9ea4a2" w={4} rough={8} />
      <L p="500,900 560,930 610,910" c="#9a9488" w={4} rough={8} />
      <L p="520,960 560,940 600,980" c="#9a9488" w={4} rough={8} />
      <Print at="335,78,34 250,530,20 375,388,34 148,382,30 50,388,28 120,530,46 480,575,34 550,130,30 345,700,22 120,975,34 535,885,34 300,795,34" c="#8a8c8c" h={9} />
      <R x={620} y={46} w={120} h={965} f="#fff" />
      <L p="620,56 620,1000" c="#ccc" w={4} sharp />
      <Print at="670,75,60 652,94,78 695,113,34 712,181,18 662,204,68" c="#333" h={11} />
      <T x={632} y={280} s={19} b>
        WARNINGS :
      </T>
      <T x={632} y={668} s={19} b>
        NOTES
      </T>
      <Print at="640,305,90 640,335,90 640,364,72 638,394,92 638,423,92 638,450,92 638,479,76 636,507,94 638,537,82" c="#555" h={11} />
      <Print at="638,690,92 638,715,92 638,730,92 638,756,92 638,770,92 638,792,92 638,806,92 638,825,92 638,849,92 638,873,92 638,895,92 638,918,92 638,936,92 638,958,92 638,982,92" c="#777" h={8} />
    </>
  );
}

function WindBarb({ from, to }: { from: string; to: string }) {
  return (
    <>
      <L p={`${from} ${to}`} c="#2222cc" w={4} sharp />
      <Dots at={`${from} ${to}`} c="#2222cc" r={7} />
    </>
  );
}

function GermanyCurrent() {
  const G = "#5aa882";
  const B = "#4a4ad4";
  return (
    <Chart ox={37} oy={45} k={1.374}>
      <GermanyBase id="terrain-now" />
      <Scallop c={G} size={15} p="130,60 155,110 210,190 190,210 120,190 60,150" w={4} />
      <Scallop c={G} size={15} p="50,195 85,260 100,340 95,410 60,465" w={4} />
      <Scallop c={G} size={15} p="240,300 270,262 350,262 430,275 490,245 530,255 510,320 450,390 410,480 385,580 350,660 335,720 250,690 200,680 205,580 240,490 275,430 240,370 232,320" w={4} />
      <Scallop c={G} size={15} p="510,322 545,350 560,450 605,560 605,640 550,690 510,740 490,860 440,880 390,800 335,740" w={4} />
      <Scallop c={G} size={15} p="270,860 300,930 320,995" w={4} />
      <Scallop c={G} size={15} p="320,840 380,900 430,995" w={4} />
      <L p="50,75 110,150 160,240 195,350 212,480 190,495 110,475 50,460" c={B} w={5} dash="6 8" />
      <L p="430,60 440,110 480,150 550,165 620,210" c={B} w={5} dash="6 8" />
      <L p="215,60 240,95 290,110" c={B} w={5} dash="6 8" />
      <L p="405,470 435,520 440,620 430,780 460,880 520,950 580,990 618,960" c={B} w={5} dash="6 8" />
      <L p="405,470 380,560 330,640 270,710 255,790 290,900 340,995" c="#6464cc" w={5} dash="6 8" />
      <L p="55,985 90,940 95,850 120,812 145,830 155,900 190,990" c={B} w={5} dash="6 8" />
      <L p="55,110 110,100 170,108 175,60" c="#f5b2ac" w={5} dash="6 8" />
      <L p="55,190 95,270 115,380 110,520 75,690" c="#f5b2ac" w={5} dash="6 8" />
      <R x={47} y={248} w={14} h={30} f="#f7b8b8" />
      <R x={580} y={700} w={28} h={32} f="#f6c0c2" />
      <WindBarb from="264,84" to="294,122" />
      <WindBarb from="473,128" to="438,190" />
      <WindBarb from="162,292" to="198,264" />
      <WindBarb from="72,888" to="110,901" />
      <WindBarb from="478,888" to="463,914" />
      <L p="275,742 378,998" c="#333" w={6} sharp />
      <T x={333} y={922} s={34} b a="middle">
        L9
      </T>
      <T x={186} y={662} s={28} b a="middle">
        H
      </T>
      <Dots at="186,676" r={7} />
      <Print at="274,536,58 274,561,40 320,553,16 320,567,16 474,630,76 478,654,36 526,648,16 526,664,16 520,766,80 528,790,34 580,784,16 580,800,16 192,919,78 202,944,36 250,938,16 250,954,16 172,696,26" c="#000" h={10} o={0.8} />
    </Chart>
  );
}

function GermanyFuture() {
  const G = "#5aa882";
  const B = "#4a4ad4";
  return (
    <Chart ox={834} oy={45} k={1.374}>
      <FrameContext.Provider value={{ ox: 37, oy: 45, k: 1.374 }}>
        <GermanyBase id="terrain-next" />
      </FrameContext.Provider>
      <Scallop c={G} size={15} p="965,60 1010,90 1050,120 1090,130 1090,175 1045,185" w={4} />
      <Scallop c={G} size={15} p="955,140 990,190 1005,260 1000,315 940,315 905,350 898,440 870,550 850,600" w={4} />
      <Scallop c={G} size={15} p="1145,760 1150,690 1175,620 1180,530 1215,450 1260,400 1310,388 1345,430 1370,510 1414,590" w={4} />
      <Scallop c={G} size={15} p="1140,690 1150,760 1200,810 1270,775 1310,820 1330,920 1360,998" w={4} />
      <Scallop c={G} size={15} p="1414,640 1370,690 1340,770 1330,860 1320,940" w={4} />
      <L p="920,60 980,130 1030,210 1070,340 1090,480 1085,640 1072,690 1055,640 1055,520 1030,445 960,440 860,455" c={B} w={5} dash="6 8" />
      <L p="1010,60 1050,95 1110,100" c={B} w={5} dash="6 8" />
      <L p="1225,60 1240,110 1290,150 1414,188" c={B} w={5} dash="6 8" />
      <L p="1185,785 1165,830 1170,900 1205,995" c={B} w={5} dash="6 8" />
      <L p="1185,785 1210,700 1220,610 1265,565 1310,600 1315,660 1295,760 1300,850 1320,940 1360,990 1410,985" c="#6464cc" w={5} dash="6 8" />
      <L p="852,985 890,930 893,845 918,812 942,830 950,900 988,990" c={B} w={5} dash="6 8" />
      <L p="960,170 1000,260 1015,340 1025,450 1010,600 970,680 920,690 885,640 870,480" c="#e8b0a0" w={5} dash="6 8" />
      <L p="970,90 968,180 985,240" c="#f0aaaa" w={5} dash="6 8" />
      <L p="850,270 870,340 882,400 878,460 850,540" c="#e89ade" w={5} dash="16 5" />
      <L p="882,385 880,430" c="#f050e0" w={10} sharp />
      <L p="1400,690 1350,740 1330,850" c="#e8b0a0" w={5} dash="6 8" />
      <R x={1392} y={700} w={16} h={46} f="#f6c0c2" />
      <WindBarb from="1097,80" to="1113,116" />
      <WindBarb from="1275,122" to="1237,192" />
      <WindBarb from="1067,376" to="1100,358" />
      <WindBarb from="1212,562" to="1234,600" />
      <WindBarb from="870,888" to="908,901" />
      <L p="846,414 862,425 846,438" close fill="#111" c="#111" sharp />
      <L p="1185,782 1232,998" c="#333" w={6} sharp />
      <T x={1206} y={930} s={34} b a="middle">
        19
      </T>
      <T x={1184} y={662} s={28} b a="middle">
        H
      </T>
      <T x={1042} y={803} s={32} b a="middle">
        L
      </T>
      <T x={856} y={242} s={20} b a="middle">
        15
      </T>
      <L p="858,252 850,268" c="#111" w={6} sharp />
      <Dots at="1184,680 1044,816" r={7} />
      <R x={860} y={60} w={44} h={20} c="#bbb" />
      <Print at="856,154,40 906,146,16 906,162,16 1252,458,78 1262,485,38 1310,478,16 1310,494,16 1334,856,78 1340,883,36 1394,876,16 1394,890,16 1170,700,28 1030,838,28" c="#000" h={10} o={0.8} />
      <T x={1496} y={160} s={20} b>
        CAT
      </T>
    </Chart>
  );
}

/* ---------- Ireland ---------- */

function Ireland() {
  const V = "#aba4da";
  return (
    <Chart ox={63} oy={45}>
      <L p="76,99 424,99" c="#a8a8bc" w={5} sharp />
      <L p="76,240 180,222 260,205 350,168" c="#888" dash="16 4" />
      <T x={96} y={219} s={19} c="#777">
        0° :FL055
      </T>
      <Print at="132,176,36 224,176,32 318,176,36 102,610,34 226,610,30" c="#333" h={9} />
      <L p="306,188 312,214" c="#555" w={6} sharp />
      <Scallop size={34} p="76,296 130,265 220,248 300,262 370,290 405,340 418,388" c="#7ee08a" w={8} />
      <L p="85,290 140,262 220,244 300,260" c="#5ccc6c" w={9} dash="10 24" />
      <L p="365,290 400,330 416,388" c="#8ee498" w={16} dash="10 12" />
      <Scallop size={34} p="76,576 130,572 170,582 215,570 270,572 305,612" c="#7ee08a" w={8} />
      <L p="240,285 290,300 290,350 325,400 350,450 365,475 395,495 380,540 330,558 260,560 290,520 270,480 300,460 280,420 260,380 240,340" close fill="#fbebc8" c="#b8ae9c" w={3} />
      <L p="140,400 190,385 225,405 215,470 190,505 140,500 160,450" close fill="#fbebc8" c="#a89f8c" w={4} />
      <L p="150,410 175,440 165,480" c="#e08060" w={5} dash="8 5" />
      <L p="205,300 220,340 245,370" c="#888" w={6} rough={8} />
      <L p="205,395 240,400 235,440 205,440" c="#999" w={4} rough={6} />
      <L p="370,600 400,560 418,560 418,616 330,612" c="#c8b8a8" fill="#f2e2d4" />
      <L p="345,605 370,605 360,590" c="#444" w={7} dash="8 5" />
      <L p="76,330 120,300 200,282 270,292 340,325 390,385 412,460 415,540 390,600" c="#e868dc" w={4} rough={0} />
      <L p="76,330 120,300 200,282 270,292 340,325 390,385 412,460 415,540 390,600" c="#c430b8" w={13} dash="14 34" />
      <L p="200,372 250,400 265,440 250,490 200,515 150,520 120,490 122,430 150,385" close c="#e868dc" w={4} rough={0} />
      <L p="200,372 250,400 265,440 250,490 200,515 150,520 120,490 122,430 150,385" close c="#c430b8" w={13} dash="14 26" />
      <L p="76,488 130,515 170,515" c="#e868dc" w={4} rough={0} />
      <L p="150,485 185,480 195,462" c="#d850c0" w={6} />
      <L p="160,520 200,545 250,550 280,530" c="#888" w={4} dash="12 5" />
      <Letter x={182} y={348} t="•" s={42} c="#222" w={6} />
      <Print at="330,290,80" c="#444" />
      <Dots at="337,290 400,576" r={6} c="#333" />
      <L p="76,620 424,620" c="#aaa" sharp />
      <L p="76,690 424,690" c={V} w={9} sharp />
      <Print at="78,706,194 78,724,220 76,797,184" c="#3028a0" h={9} o={0.8} />
      <R x={374} y={696} w={48} h={86} f="#17868e" />
      <L p="412,708 396,718 408,732 395,748 385,770" c="#8cd6d8" w={5} rough={1} />
      <L p="76,808 424,808" c={V} w={10} sharp />
      <Print at="80,819,256 90,832,56 82,857,194 78,870,112 78,884,60 78,896,116 78,908,78" c="#4a44ac" />
      <L p="76,929 424,929" c="#b4aee0" w={5} sharp />
      <L p="430,99 430,930" c={V} w={8} sharp />
      <L p="432,104 1016,104" c="#9a96d0" w={13} sharp />
      <L p="432,929 1016,929" c="#9a96d0" w={8} sharp />
      <L p="432,131 1016,131" c="#d0ccee" sharp />
      <L p="432,535 1022,535" c={V} w={4} sharp />
      <L p="432,909 1016,909" c={V} sharp />
      {[478, 627, 731].map((x) => (
        <L key={x} p={`${x},112 ${x},906`} c="#c4bee8" w={4} sharp />
      ))}
      <Print at="442,122,30 522,122,60 650,122,58 843,122,172" c="#3028a0" h={10} o={0.8} />
      <Letter x={456} y={154} t="A" s={36} c="#222" w={4} />
      <Letter x={456} y={557} t="B" s={36} c="#222" w={4} />
      <Print at="484,140,44 480,156,96 480,171,96 629,140,64 629,156,42 629,171,46 732,141,160 732,156,120 732,171,268 732,186,120 732,201,164 484,543,44 480,559,90 629,543,44 629,559,58 732,543,180 732,559,208 732,574,138" c="#444" />
      <Print at="434,918,396" c="#555" h={8} />
    </Chart>
  );
}

/* ---------- Romania ---------- */

function Romania() {
  return (
    <Chart ox={42} oy={56} k={1.397}>
      <L
        p="50,290 75,225 120,185 155,145 220,150 290,150 350,185 400,155 470,140 480,105 520,88 550,110 575,200 605,290 645,340 662,430 650,540 652,620 690,670 722,680 722,980 690,960 650,945 600,900 540,885 460,920 400,980 300,965 170,950 145,940 130,860 120,800 80,820 50,790"
        close
        fill="#fef1e4"
        c="#e4d8d2"
        w={3}
      />
      <L p="470,140 480,105 520,88 550,110 575,200 605,290 645,340 662,430 650,540 652,620 690,670 722,690" c="#dcb8bc" w={4} />
      <L p="170,950 300,965 400,980 460,920 540,885 600,900 650,945 722,975" c="#d0b0ba" w={4} />
      <L p="90,205 110,190 140,180 160,140 200,150 260,150 300,170 350,188" c="#c0bcbc" w={4} rough={8} />
      <L p="50,790 80,825 105,790 130,780 125,830 140,860" c="#c0bcbc" w={4} rough={7} />
      <L p="80,357 240,310 320,302 390,275 405,230 405,170" c="#d4ecca" w={6} rough={0} />
      <L p="110,775 180,765 260,800 340,850 390,900 425,950" c="#dce8c6" w={6} rough={0} />
      <L p="50,485 75,530 70,610 50,720" c="#e4b0ac" w={4} rough={1} />
      <L p="720,675 675,725 648,800 665,890 692,960 722,975" c="#dc9c9c" w={4} rough={1} />
      <L p="722,760 705,850 695,1015" c="#b0bab0" w={4} rough={1} />
      <Peaks at="139,390 444,347 489,577 412,655 113,693" c="#74267c" s={0.85} />
      <R x={313} y={178} w={40} h={78} f="#cdf0d4" c="#5c8c68" />
      <R x={322} y={329} w={38} h={150} f="#cdf0d4" c="#5c8c68" />
      <R x={292} y={494} w={100} h={28} f="#7ed89c" c="#4c8c64" />
      <R x={142} y={860} w={38} h={76} f="#cdf0d4" c="#5c8c68" />
      {["317,186,32", "334,200,14", "334,214,14", "334,228,14", "317,243,32", "325,338,32", "342,355,14", "342,372,14", "342,390,14", "325,403,32", "334,425,22", "334,440,22", "334,455,22", "334,469,22", "296,502,92", "320,514,60", "146,870,30", "162,885,14", "162,900,14", "146,915,30", "162,928,14"].map((q) => (
        <Print key={q} at={q} c="#1c5030" h={9} o={0.7} />
      ))}
      <R x={284} y={534} w={182} h={52} f="#fff" c="#b8a8a4" />
      <Print at="288,542,176 310,558,132 314,575,124" c="#333" h={9} />
      {["166,223", "537,140", "239,473", "611,486", "447,873"].map((q) => {
        const [x, y] = q.split(",").map(Number);
        return (
          <g key={q}>
            <R x={x - 18} y={y - 11} w={36} h={22} f="#f4c8a4" />
            <Print at={`${x - 17},${y - 5},34 ${x - 17},${y + 6},34`} c="#8c5434" h={8} />
          </g>
        );
      })}
      {["189,172", "537,172", "239,503", "607,521", "453,842", "227,884", "702,797"].map((q) => {
        const [x, y] = q.split(",").map(Number);
        return (
          <g key={q}>
            <R x={x - 24} y={y - 12} w={48} h={24} f="#e8e0d8" />
            <Print at={`${x - 20},${y},40`} c="#333" h={10} />
          </g>
        );
      })}
      {["140,195", "196,205", "474,200", "597,300", "218,377", "288,438", "527,430", "256,571", "448,808", "234,852", "679,843", "699,710"].map((q) => {
        const [x, y] = q.split(",").map(Number);
        return <L key={q} p={`${x - 10},${y} ${x + 4},${y - 4} ${x + 10},${y + 10}`} c="#777" w={5} sharp />;
      })}
      <Print at="54,70,128 52,84,82 52,100,92 52,117,66" c="#333" h={9} />
      <R x={668} y={66} w={56} h={158} f="#fff" c="#ddd" />
      <Print at="672,74,50 672,88,50 672,101,50 672,115,50 672,128,50 672,142,50 672,155,50 672,170,50 672,188,44 672,214,50" c="#333" h={9} />
      <R x={51} y={901} w={56} h={118} f="#fff" />
      <L p="51,901 107,901 107,1015" c="#bbb" sharp />
      <Print at="52,925,14 52,948,14 52,972,50 52,996,10" c="#333" h={9} />
    </Chart>
  );
}

/* ---------- Serbia and Montenegro ---------- */

function Serbia() {
  return (
    <Chart ox={831} oy={56} k={1.397}>
      <L p="841,101 1513,101" c="#999" w={4} sharp />
      <L p="845,248 920,205 965,150 1015,120" c="#777" w={4} dash="20 5" />
      <L p="841,472 925,430 965,370 1010,290 1074,205" c="#777" w={5} dash="24 5" />
      <L p="930,190 940,235 965,260 970,300" c="#e8c4c8" w={4} />
      <L p="1030,380 1040,430 1070,480 1070,520 1030,570 1000,600 950,625 925,640 920,700 930,770" c="#eebcc0" w={4} />
      <L p="890,545 905,590 925,640" c="#eebcc0" w={4} />
      <L p="965,600 1040,600 1075,655" c="#e8c4c8" />
      <L p="970,290 1000,290 1030,330 1045,310 1055,330 1035,370" c="#c4c4c4" rough={7} />
      <L p="845,300 880,240 940,300 850,330" c="#e0e0e0" />
      <L p="945,440 980,450 1005,485" c="#c4c4c4" />
      <L p="850,650 855,770" c="#aaa" rough={7} />
      <L p="995,650 1030,700" c="#aaa" />
      <L p="1000,768 1020,740 1070,740" c="#aaa" sharp />
      <L p="880,540 890,550 905,540" c="#bbb" />
      {["874,182", "906,337", "888,514"].map((q) => {
        const [x, y] = q.split(",").map(Number);
        return <Letter key={q} x={x} y={y} t="·" s={30} size={24} c="#444" w={4} />;
      })}
      {["966,186", "962,272", "870,418", "1006,482", "964,568", "998,650", "878,730", "948,758", "894,135", "965,142", "1066,730"].map((q) => {
        const [x, y] = q.split(",").map(Number);
        return <L key={q} p={`${x - 8},${y - 5} ${x},${y + 5} ${x + 8},${y + 2}`} c="#888" w={4} sharp />;
      })}
      <Print at="843,188,20 843,360,26 1008,546,34 898,292,12 842,563,16 841,607,10" c="#333" h={12} />
      <L p="841,779 1091,779" c="#999" w={4} sharp />
      <L p="947,779 947,945" c="#bbb" sharp />
      <L p="841,948 1091,948" c="#999" w={4} sharp />
      <Print at="843,822,56 843,842,50 843,862,82 843,883,98 843,900,46 975,797,86 968,814,100 964,833,106 990,850,58 962,870,112 956,890,122 966,910,108 994,927,52" c="#333" h={9} />
      {[
        [1091, 7, 948],
        [1105, 3, 797],
        [1138, 4, 797],
        [1194, 4, 797],
        [1248, 4, 797],
        [1303, 4, 797],
        [1357, 4, 797],
        [1496, 4, 797],
      ].map(([x, w, e]) => (
        <L key={x} p={`${x},101 ${x},${e}`} c="#999" w={w} sharp />
      ))}
      {[172, 334, 475, 636].map((y) => (
        <L key={y} p={`1091,${y} 1513,${y}`} c="#999" w={4} sharp />
      ))}
      <L p="1091,800 1513,800" c="#888" w={8} sharp />
      <Print at="1110,127,24 1110,148,24 1158,120,18 1152,138,26 1158,156,16 1202,127,36 1214,146,14 1268,138,16 1308,127,46 1322,147,18 1408,127,36 1406,147,44" c="#222" h={10} o={0.7} />
      <Print at="1362,182,120 1362,195,124 1362,207,76 1362,342,94 1362,484,106 1362,496,108 1362,510,76 1362,646,82 1362,659,88 1116,183,14 1154,182,24 1150,196,30 1196,183,42 1252,182,14 1252,195,36 1252,208,10 1114,342,20 1154,342,24 1196,342,42 1114,485,20 1154,485,24 1196,485,42 1196,498,42 1252,484,14 1252,497,36 1252,511,10 1114,646,20 1154,646,24 1144,660,50 1196,646,42 1196,659,14 1196,673,42 1252,646,14 1252,659,20 1252,672,22 1498,182,14 1498,195,14" c="#555" h={8} />
      {[832, 868, 888, 907, 927, 946].map((y) => (
        <L key={y} p={`1091,${y} 1513,${y}`} c="#999" w={4} sharp />
      ))}
      {[1138, 1194, 1248, 1326, 1371, 1438, 1488, 1512].map((x) => (
        <L key={x} p={`${x},${x === 1194 || x === 1326 || x === 1438 ? 832 : 800} ${x},946`} c="#888" w={4} sharp />
      ))}
      {[845, 860, 878, 897, 917, 936].map((y) => (
        <Print key={y} at={`1106,${y},18 1158,${y},32 1222,${y},18 1272,${y},34 1338,${y},18 1392,${y},30 1452,${y},18 1498,${y},12`} c="#333" h={10} />
      ))}
      <Print at="1104,812,24 1104,824,24" c="#111" h={11} o={0.9} />
      <Print at="1184,817,26 1300,817,26 1412,817,26" c="#222" h={9} />
    </Chart>
  );
}

/* ---------- Slovenia ---------- */

function Slovenia() {
  return (
    <Chart ox={40} oy={56}>
      <T x={52} y={86} s={20} serif c="#555">
        W_208843/Z1
      </T>
      <T x={52} y={112} s={20} serif c="#555">
        RG/J,P,A,12
      </T>
      <T x={52} y={138} s={20} serif c="#555">
        GMRC/TC
      </T>
      <T x={52} y={163} s={20} serif c="#333">
        IC CHART
      </T>
      <T x={52} y={205} s={24} serif b c="#222">
        m 2012 to 2018
      </T>
      <T x={62} y={243} s={24} serif b c="#222">
        VALID m 2012
      </T>
      {[176, 255, 413].map((y) => (
        <L key={y} p={`52,${y} 268,${y}`} c="#444" w={7} sharp />
      ))}
      <Print at="54,273,82 54,292,190 54,310,196 54,327,138 54,345,112 54,363,26 54,380,86 54,398,24" c="#555" />
      <L p="268,68 268,1010" c="#333" w={7} sharp />
      <L p="268,555 300,575 320,592 350,580 365,546 400,575 425,625 410,645 375,680 355,670 350,700 362,740 268,740" fill="#316bff" c="#1c3bb0" w={4} sharp />
      <L p="270,558 300,570 318,584" c="#111" w={12} sharp />
      <Dots at="427,624 414,643 398,666 376,672 346,538 620,378 580,198 571,183 932,250 944,267 844,592" r={7} />
      <L p="270,222 340,235 410,250 500,262 540,282 600,284 640,300 690,270 720,215 750,205 880,210 910,185 990,170" c="#999" w={5} />
      <L p="275,158 318,152 328,122 380,148 450,208 520,240 610,238 670,210 740,195" c="#ccc" w={5} rough={3} />
      <L p="740,210 860,222 950,238 992,290" c="#d0d0d0" w={5} rough={3} />
      <L p="415,250 350,295 328,345 335,370 400,385 385,430 350,455 388,470 378,530 420,555 462,605 440,632" c="#a4a4a4" w={5} />
      <L p="390,690 430,682 450,695 485,660 510,675 550,668 575,680 625,650 648,600 670,645 715,685 745,660 810,700 862,675 840,630 872,605 835,578 900,535 948,525 955,440 922,405 935,375 990,350" c="#999" w={5} />
      <L p="415,250 510,280 520,320 580,355 610,410 655,432 700,418 780,410 830,450 890,475 950,520 990,545" c="#ccc" w={5} />
      <L p="450,348 500,345 520,320" c="#ccc" w={5} />
      <L p="875,605 905,620 910,660 950,675 990,650" c="#c8c8c8" w={5} />
      <L p="895,72 915,130 925,165 940,180" c="#dcc8c8" w={4} />
      <L p="365,128 398,148" c="#555" w={6} />
      <L p="468,192 498,180" c="#666" w={5} />
      <L p="508,212 530,205 558,212" c="#333" w={6} />
      <L p="636,208 664,200" c="#444" w={6} />
      <L p="450,346 464,348" c="#444" w={6} />
      <L p="850,585 870,608" c="#555" w={5} />
      <L p="326,530 332,520 330,535" c="#444" w={5} sharp />
      <L p="490,420 490,650" c="#f0eaf0" sharp />
      <L p="758,500 758,600" c="#f0eaf0" sharp />
      <Print at="476,84,16 474,100,20 474,115,16 738,84,22 740,100,18 738,116,22 284,443,48" c="#666" h={9} />
      <L p="375,520 378,540" c="#d8a060" w={5} sharp />
      <circle cx={692} cy={382} r={31} fill="#fff" stroke="#333" strokeWidth={6} />
      <T x={732} y={452} s={40} b a="middle">
        A
      </T>
      <L p="574,740 574,732 602,740" fill="#1c1c8c" c="#1c1c8c" sharp />
      {[741, 789, 826, 864, 903, 941, 979].map((y) => (
        <L key={y} p={`52,${y} 992,${y}`} c="#444" w={6} sharp />
      ))}
      <L p="119,741 119,1010" c="#555" w={7} sharp />
      <L p="841,741 841,1010" c="#555" w={7} sharp />
      <L p="993,741 993,1010" c="#999" w={3} dash="16 6" sharp />
      <T x={52} y={774} s={22} serif>
        VIS
      </T>
      <T x={194} y={774} s={23} serif a="middle">
        WEATHER
      </T>
      <T x={562} y={774} s={25} serif a="middle">
        CLOUDS
      </T>
      <T x={917} y={774} s={25} serif a="middle">
        TURB
      </T>
      <T x={52} y={815} s={22} serif>
        8KM
      </T>
      <T x={192} y={812} s={22} serif a="middle">
        -
      </T>
      <T x={564} y={816} s={25} serif a="middle">
        FEW/SCT CU,SC 075/080
      </T>
      <T x={984} y={853} s={24} serif a="end">
        _ 040/100
      </T>
      <T x={52} y={892} s={24} serif>
        KM
      </T>
      <T x={192} y={892} s={25} serif a="middle">
        SHRA
      </T>
      <T x={563} y={892} s={25} serif a="middle">
        TCU 060/200
      </T>
      <T x={52} y={929} s={24} serif>
        KM
      </T>
      <T x={192} y={929} s={25} serif a="middle">
        TSRA
      </T>
      <T x={560} y={930} s={25} serif a="middle">
        CB 060/XXX
      </T>
    </Chart>
  );
}

/* ---------- United Kingdom ---------- */

function UnitedKingdom() {
  return (
    <Chart ox={63} oy={56}>
      <L p="76,89 422,89 422,780 76,780" c="#aaa" w={4} sharp />
      <L p="368,90 390,140 422,200 422,90" fill="#dfe8df" c="#8a9a8a" w={4} />
      <L p="375,95 400,150 418,195" c="#444" w={8} dash="8 10" />
      <Print at="80,295,14 80,270,14 80,380,14 380,590,16 385,575,12" c="#7cc084" h={12} />
      <Scallop size={17} p="76,148 140,155 210,170 290,195 360,222 422,250" w={4} />
      <Scallop size={17} p="76,243 150,250 220,270 290,298 360,335 422,385" w={4} />
      <Scallop size={17} p="120,780 180,750 240,710 275,690 330,620 365,600" w={4} />
      <Scallop size={17} p="76,625 120,600 170,565 230,565 270,525 298,492 330,525 355,590 380,640 420,682" w={4} />
      <Scallop size={17} p="298,780 320,720 350,640 370,600" w={4} />
      <L p="212,460 240,475 250,500 225,565" c="#333" w={5} rough={0} />
      <L p="105,222 200,216 260,228 330,254" c="#f49a8a" w={4} rough={0} />
      <L p="105,222 200,216 260,228 330,254" c="#e8503c" w={9} dash="10 26" />
      <L p="76,308 140,320 220,355 280,400 340,465 380,530 415,588" c="#f28a78" w={5} rough={0} />
      <L p="76,308 140,320 220,355 280,400 340,465 380,530 415,588" c="#e83a24" w={11} dash="10 26" />
      <L p="76,355 130,365 200,405 260,460 295,510 306,570 295,640 265,715" c="#e48ae4" w={6} rough={0} />
      <L p="76,355 130,365 200,405 260,460 295,510 306,570 295,640 265,715" c="#c04cc4" w={12} dash="12 28" />
      <L p="78,425 115,455 128,490 115,525 80,558" c="#e48ae4" w={6} rough={0} />
      <L p="78,425 115,455 128,490 115,525 80,558" c="#c04cc4" w={12} dash="10 24" />
      <L p="246,150 130,368" c="#555" w={5} sharp />
      <L p="326,360 400,336" c="#555" w={5} sharp />
      <L p="360,444 235,495" c="#555" w={5} sharp />
      <L p="76,477 165,477" c="#555" w={5} sharp />
      <L p="76,575 170,606" c="#555" w={5} sharp />
      <L p="260,612 400,610" c="#555" w={5} sharp />
      <L p="210,692 330,740" c="#555" w={5} sharp />
      <L p="355,243 392,262" c="#555" w={5} dash="8 4" sharp />
      <Dots at="247,150 228,181 187,262 152,328 130,368 400,336 358,444 163,477 170,606 399,610 337,610 329,738 390,262 248,708" r={7} />
      <L p="76,660 130,640 200,635 290,630" c="#ccc" />
      <L p="85,770 150,745 160,700" c="#ccc" />
      <Print at="258,141,44 362,315,44 336,424,44 135,621,44 238,600,44 190,678,44 82,770,18" c="#333" h={8} />
      <L p="212,480 212,540" c="#777" w={8} dash="6 3" sharp />
      <L p="212,140 218,120 224,105" c="#777" w={4} />
      <Letter x={164} y={125} t="A" s={46} size={30} c="#555" />
      <Letter x={337} y={125} t="F" s={46} size={30} c="#555" />
      <Letter x={173} y={437} t="C" s={46} size={30} c="#555" />
      <Letter x={366} y={729} t="E" s={46} size={30} c="#555" />
      <Letter x={258} y={748} t="D" s={44} size={30} c="#555" />
      <L p="76,788 424,788" c="#aaa" w={10} sharp />
      <L p="424,788 424,1000" c="#aaa" w={5} sharp />
      <L p="76,911 422,911" c="#999" w={7} sharp />
      <L p="76,1000 422,1000" c="#bbb" w={4} sharp />
      <Print at="78,806,110 78,831,44 240,831,130 90,852,138 240,852,140 92,872,108 242,872,150 92,893,100 240,893,166 340,946,76 78,967,42 388,967,28 262,987,152" c="#333" h={8} />
      <Print at="78,928,94" c="#e05848" h={7} />
      <L p="436,1000 436,89 1016,89" c="#999" w={6} sharp />
      <L p="455,108 535,104 542,125 520,158 450,155 448,125" close fill="#dfe85c" c="#dfe85c" sharp />
      <L p="460,135 490,120 530,128" c="#ccd84c" w={4} />
      <T x={494} y={184} s={19} b a="middle">
        Met Office
      </T>
      <T x={573} y={140} s={34} b c="#111">
        Forecast Weather below 1
      </T>
      <Print at="560,185,226 806,185,64 892,185,120" c="#222" h={9} o={0.75} />
      <L p="436,206 1016,206" c="#888" w={8} sharp />
      <L p="436,229 1016,229" c="#999" sharp />
      <Print at="440,220,46 546,221,194 914,221,60" c="#222" h={9} o={0.75} />
      {[309, 420, 622, 735, 828].map((y) => (
        <L key={y} p={`436,${y} 1016,${y}`} c="#aaa" w={4} sharp />
      ))}
      <L p="436,960 1016,960" c="#bbb" sharp />
      <L p="436,998 1016,998" c="#999" w={6} sharp />
      <L p="489,213 489,958" c="#999" w={4} sharp />
      <L p="800,213 800,958" c="#999" w={4} sharp />
      {[
        ["A", 256],
        ["B", 333],
        ["C", 445],
        ["D", 645],
        ["E", 758],
        ["F", 855],
      ].map(([t, y]) => (
        <Letter key={t} x={462} y={Number(y)} t={String(t)} s={36} size={25} c="#333" />
      ))}
      <Print at="492,241,64 492,259,118 492,277,94 492,319,64 492,336,262 492,354,194 492,372,110 492,389,102 492,433,104 492,449,118 492,467,246 508,484,100 492,500,266 508,518,112 492,536,222 492,552,228 492,570,252 492,588,102 492,631,64 492,648,204 492,666,248 492,684,96 492,701,94 492,745,64 492,762,118 492,779,94 492,839,64 492,857,126 492,874,222 492,892,184 492,909,176 492,927,94" c="#333" h={8} />
      <Print at="804,241,150 820,259,136 804,277,212 804,319,212 804,336,150 820,354,136 804,372,210 804,433,212 804,449,150 820,467,136 804,484,212 820,500,184 804,518,208 820,536,196 804,631,178 820,648,136 804,666,212 820,684,50 804,745,212 804,762,180 820,779,136 804,797,194 804,839,196 804,857,150 820,874,136 804,892,166 804,909,212" c="#333" h={8} />
      <Print at="440,978,226" c="#333" h={9} />
      <R x={1016} y={90} w={13} h={900} f="#fdfdfd" />
    </Chart>
  );
}

/* ---------- toolbar and status icons ---------- */

function FavoritesRecentIcon() {
  return (
    <svg viewBox="0 0 120 94" className="h-[94px] w-[120px]" aria-hidden="true">
      <path fill="#fff" d="M41 17l4.200 12H58l-10.400 7.800L51.500 50 41 42.200 30.500 50l3.900-13.200L24 29h12.800z" />
      <circle cx="78" cy="56" r="16.500" fill="none" stroke="#fff" strokeWidth="3.500" />
      <path d="M78 48v10h6" fill="none" stroke="#fff" strokeWidth="3.500" />
    </svg>
  );
}

function ReloadIcon() {
  return (
    <svg viewBox="0 0 120 94" className="h-[94px] w-[120px]" aria-hidden="true">
      <path d="M80.500 56A21 21 0 1 1 75 32.500" fill="none" stroke="#fff" strokeWidth="8" />
      <path fill="#fff" d="M86 22v23.500L63 41z" />
    </svg>
  );
}

function WifiIcon() {
  return (
    <svg viewBox="0 0 42 32" className="h-8 w-[42px]" aria-hidden="true">
      <g fill="none" stroke="#fff" strokeWidth="5.500">
        <path d="M2.500 12.500a26.500 26.500 0 0 1 37 0" />
        <path d="M9.500 19.500a16.500 16.500 0 0 1 23 0" />
      </g>
      <path fill="#fff" d="M21 31l-6.500-7a9.500 9.500 0 0 1 13 0z" />
    </svg>
  );
}

function LocationIcon() {
  return (
    <svg viewBox="0 0 30 30" className="size-[30px]" aria-hidden="true">
      <path fill="#fff" stroke="#fff" strokeWidth="1.500" strokeLinejoin="round" d="M28 2L17 28.500l-1.500-13L2 14z" />
    </svg>
  );
}

function BatteryIcon() {
  return (
    <svg viewBox="0 0 78 36" className="h-9 w-[78px]" aria-hidden="true">
      <rect x="1.500" y="1.500" width="67" height="33" rx="10" fill="none" stroke="#8093aa" strokeWidth="3" />
      <rect x="6" y="6" width="34" height="24" rx="5" fill="#fff" />
      <path fill="#8093aa" d="M72 12c5 2 5 10 0 12z" />
    </svg>
  );
}

/* ---------- data ---------- */

const sections = [
  { title: "WEATHER", items: ["SIGWX", "LLSIGWX"] },
  {
    title: "PRESSURE/WIND/PRECIPITATION",
    items: ["Surface - Central", "Surface - Iceland", "Surface - Northern", "Surface - South Eastern", "Surface - South Western", "Surface - UK/Ireland"],
  },
  { title: "HEIGHTS/TEMP/WIND - 850 HPA", items: ["FL050 - Central", "FL050 - Iceland"] },
];

const charts = [
  { name: "Austria & Switzerland (Current)", Art: AustriaCurrent },
  { name: "Austria & Switzerland (Future)", Art: AustriaFuture },
  { name: "Belgium", Art: Belgium },
  { name: "Croatia", Art: Croatia },
  { name: "France", Art: France },
  { name: "Germany (Current)", Art: GermanyCurrent },
  { name: "Germany (Future)", Art: GermanyFuture },
  { name: "Ireland", Art: Ireland },
  { name: "Romania", Art: Romania },
  { name: "Serbia and Montenegro", Art: Serbia },
  { name: "Slovenia", Art: Slovenia },
  { name: "United Kingdom", Art: UnitedKingdom },
];

export default function App() {
  const [selected, setSelected] = useState("LLSIGWX");
  return (
    <div className="flex h-screen flex-col overflow-hidden bg-[#101828] font-['Inter',sans-serif] text-white">
      <header className="h-[219px] shrink-0 bg-[#1d3553]">
        <div className="flex h-[70px] items-center justify-between pr-4 pl-5 text-[36px] leading-none">
          <div className="flex gap-8">
            <span>10:33 AM</span>
            <span>Thu May 20</span>
          </div>
          <div className="flex items-center gap-2.5">
            <WifiIcon />
            <LocationIcon />
            <span>54%</span>
            <BatteryIcon />
          </div>
        </div>
        <div className="flex h-[149px] font-['Liberation_Sans',sans-serif]">
          <div className="flex w-[917px] shrink-0 items-center gap-[18px] pr-[50px]">
            <button className="mt-1 h-[94px] w-[200px] bg-[#101828] pt-1.5 pl-3.5 text-[37px] font-bold [clip-path:polygon(14px_0,100%_0,100%_100%,14px_100%,0_50%)]">
              Regions
            </button>
            <h1 className="flex-1 pt-1 pl-[78px] text-center text-[53px] leading-none [-webkit-text-stroke:1px_white]">Europe</h1>
            <button aria-label="Favorites and recent" className="bg-[#101828]">
              <FavoritesRecentIcon />
            </button>
            <button aria-label="Reload" className="bg-[#101828]">
              <ReloadIcon />
            </button>
          </div>
          <div className="flex-1 pt-6 pl-[26px] text-center">
            <h2 className="text-[47px] leading-[54px] [-webkit-text-stroke:1px_white]">Europe</h2>
            <p className="text-[40px] leading-[50px]">{selected}</p>
          </div>
        </div>
      </header>

      <div className="flex min-h-0 flex-1">
        <nav className="w-[917px] shrink-0 overflow-y-auto border-r-[3px] border-[#1f2d40] bg-[#132133] [scrollbar-width:none]">
          {sections.map((section) => (
            <section key={section.title}>
              <h3 className="flex h-[101px] items-center border-b-2 border-[#1f3245] bg-[#101828] pl-[18px] text-[38px] font-semibold text-[#6b7688]">
                {section.title}
              </h3>
              <ul>
                {section.items.map((item, i) => (
                  <li key={item} className={item === selected ? "bg-[#2b90e0]" : ""}>
                    <button
                      onClick={() => setSelected(item)}
                      className="block h-[130px] w-full pl-[18px] text-left font-['Liberation_Sans',sans-serif] text-[46px] font-bold"
                    >
                      <span
                        className={
                          i < section.items.length - 1 && section.items[i + 1] !== selected && item !== selected
                            ? "flex h-full items-center border-b-2 border-[#22354a]"
                            : "flex h-full items-center"
                        }
                      >
                        {item}
                      </span>
                    </button>
                  </li>
                ))}
              </ul>
            </section>
          ))}
        </nav>

        <main className="min-w-0 flex-1 overflow-y-auto pt-[42px] pr-[17px] pl-[43px] [scrollbar-width:none]">
          <ul className="grid grid-cols-4 gap-[45px]">
            {charts.map(({ name, Art }) => (
              <li key={name}>
                <button className="block w-full">
                  <span className="block aspect-square overflow-hidden rounded-[3px] bg-[#fdfdfd] shadow-[0_0_4px_1px_#000]">
                    <Art />
                  </span>
                  <span className="flex h-[147px] items-center justify-center text-center text-[40px] leading-[49px] font-medium">{name}</span>
                </button>
              </li>
            ))}
          </ul>
        </main>
      </div>
    </div>
  );
}
